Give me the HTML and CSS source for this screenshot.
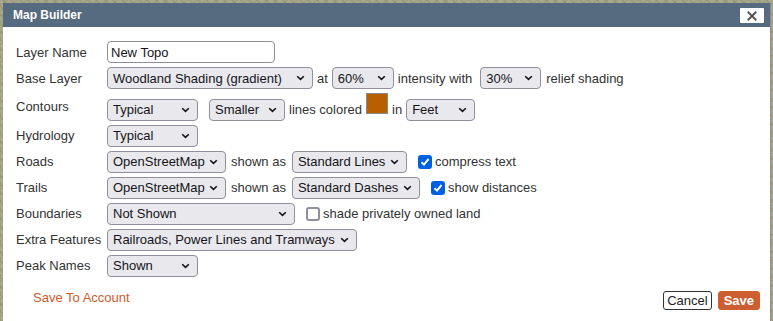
FILE: index.html
```html
<!DOCTYPE html>
<html>
<head>
<meta charset="utf-8">
<title>Map Builder</title>
<link rel="stylesheet" href="styles.css">
</head>
<body>
<div class="dialog">
  <div class="titlebar">
    <span class="title">Map Builder</span>
    <button class="close" aria-label="Close">
      <svg width="10" height="10" viewBox="0 0 10 10"><path d="M1.5 1.5 L8.5 8.5 M8.5 1.5 L1.5 8.5" stroke="#555" stroke-width="2" stroke-linecap="square"/></svg>
    </button>
  </div>
  <div class="content">
    <div class="form">
      <div class="label">Layer Name</div>
      <div class="ctl"><input class="text" type="text" value="New Topo"></div>

      <div class="label">Base Layer</div>
      <div class="ctl">
        <select class="sel w206"><option>Woodland Shading (gradient)</option></select>
        <span>at</span>
        <select class="sel w62"><option>60%</option></select>
        <span>intensity with</span>
        <select class="sel w61 ml4"><option>30%</option></select>
        <span class="ml1">relief shading</span>
      </div>

      <div class="label">Contours</div>
      <div class="ctl">
        <select class="sel w91"><option>Typical</option></select>
        <select class="sel w76 ml7"><option>Smaller</option></select>
        <span>lines colored</span>
        <span class="swatch"></span>
        <span>in</span>
        <select class="sel w69"><option>Feet</option></select>
      </div>

      <div class="label">Hydrology</div>
      <div class="ctl">
        <select class="sel w91"><option>Typical</option></select>
      </div>

      <div class="label">Roads</div>
      <div class="ctl">
        <select class="sel w119"><option>OpenStreetMap</option></select>
        <span class="ml1">shown as</span>
        <select class="sel w115 ml2"><option>Standard Lines</option></select>
        <input class="check ml7" type="checkbox" checked>
        <span class="tight">compress text</span>
      </div>

      <div class="label">Trails</div>
      <div class="ctl">
        <select class="sel w119"><option>OpenStreetMap</option></select>
        <span class="ml1">shown as</span>
        <select class="sel w128 ml2"><option>Standard Dashes</option></select>
        <input class="check ml7" type="checkbox" checked>
        <span class="tight">show distances</span>
      </div>

      <div class="label">Boundaries</div>
      <div class="ctl">
        <select class="sel w188"><option>Not Shown</option></select>
        <input class="check ml7" type="checkbox">
        <span class="tight">shade privately owned land</span>
      </div>

      <div class="label">Extra Features</div>
      <div class="ctl">
        <select class="sel w250"><option>Railroads, Power Lines and Tramways</option></select>
      </div>

      <div class="label">Peak Names</div>
      <div class="ctl">
        <select class="sel w91"><option>Shown</option></select>
      </div>
    </div>

    <div class="footer">
      <a class="account" href="#">Save To Account</a>
      <div class="buttons">
        <button class="btn cancel">Cancel</button>
        <button class="btn save">Save</button>
      </div>
    </div>
  </div>
</div>
</body>
</html>
```
FILE: styles.css
```css
html, body {
  margin: 0;
  padding: 0;
  height: 321px;
  overflow: hidden;
}
body {
  background-color: #a9a88c;
  background-image:
    repeating-linear-gradient(45deg, rgba(120,110,70,0.2) 0 2px, transparent 2px 6px),
    repeating-linear-gradient(-30deg, rgba(90,120,80,0.2) 0 1px, transparent 1px 5px);
  font-family: "Liberation Sans", Arial, sans-serif;
  font-size: 13px;
  color: #333;
}
.dialog {
  margin: 3px 3px 0 3px;
  width: 767px;
  height: 330px;
  background: #fff;
  box-shadow: 1px 0 0 #8c8c84;
}
.titlebar {
  height: 24px;
  background: #566a80;
  display: flex;
  align-items: center;
  justify-content: space-between;
  padding: 0 6px 0 10px;
}
.title {
  color: #fff;
  font-weight: bold;
  font-size: 12px;
}
.close {
  width: 24px;
  height: 15px;
  margin-top: 1px;
  background: #fff;
  border: none;
  border-radius: 1px;
  padding: 0;
  display: flex;
  align-items: center;
  justify-content: center;
}
.content {
  padding: 14px 10px 0 13px;
}
.form {
  display: grid;
  grid-template-columns: 91px auto;
  row-gap: 4px;
}
.label {
  align-self: center;
  white-space: nowrap;
}
.ctl {
  display: flex;
  align-items: baseline;
  gap: 4px;
  white-space: nowrap;
}
.text {
  width: 168px;
  height: 22px;
  box-sizing: border-box;
  border: 1px solid #8f8f9d;
  border-radius: 4px;
  padding: 0 3px;
  font-family: "Liberation Sans", Arial, sans-serif;
  font-size: 13px;
  color: #15141a;
  background: #fff;
  margin: 0;
}
.sel {
  -webkit-appearance: none;
  appearance: none;
  height: 22px;
  box-sizing: border-box;
  border: 1px solid #8f8f9d;
  border-radius: 4px;
  background-color: #e9e9ed;
  background-image: url("data:image/svg+xml,%3Csvg xmlns='http://www.w3.org/2000/svg' width='9' height='6' viewBox='0 0 9 6'%3E%3Cpath d='M1.2 1.2 L4.5 4.4 L7.8 1.2' fill='none' stroke='%2315141a' stroke-width='1.6'/%3E%3C/svg%3E");
  background-repeat: no-repeat;
  background-position: right 7px center;
  padding: 0 20px 0 5px;
  font-family: "Liberation Sans", Arial, sans-serif;
  font-size: 13px;
  color: #15141a;
  margin: 0;
}
.w61 { width: 61px; }
.w62 { width: 62px; }
.w69 { width: 69px; }
.w76 { width: 76px; }
.w91 { width: 91px; }
.w115 { width: 115px; }
.w119 { width: 119px; }
.w128 { width: 128px; }
.w188 { width: 188px; }
.w206 { width: 206px; }
.w250 { width: 250px; }
.ml1 { margin-left: 1px; }
.ml2 { margin-left: 2px; }
.ml4 { margin-left: 4px; }
.ml7 { margin-left: 7px; }
.tight { margin-left: -1px; }
.swatch {
  display: inline-block;
  width: 22px;
  height: 21px;
  box-sizing: border-box;
  border: 1px solid #8a8a8a;
  background: #b85f00;
}
.check {
  -webkit-appearance: none;
  appearance: none;
  align-self: center;
  width: 14px;
  height: 14px;
  box-sizing: border-box;
  margin-top: 0;
  margin-bottom: 0;
  margin-right: 0;
  border: 2px solid #8f8f9d;
  border-radius: 3px;
  background: #fff;
}
.check:checked {
  border-color: #0060df;
  background-color: #0060df;
  background-image: url("data:image/svg+xml,%3Csvg xmlns='http://www.w3.org/2000/svg' width='10' height='10' viewBox='0 0 10 10'%3E%3Cpath d='M1.5 5.2 L4 7.6 L8.6 2' fill='none' stroke='%23fff' stroke-width='2'/%3E%3C/svg%3E");
  background-repeat: no-repeat;
  background-position: center;
}
.footer {
  display: flex;
  justify-content: space-between;
  align-items: flex-start;
  margin-top: 14px;
}
.account {
  color: #d05a2c;
  text-decoration: none;
  margin-left: 17px;
  line-height: 15px;
  margin-top: -1px;
}
.buttons {
  display: flex;
  gap: 6px;
}
.btn {
  height: 19px;
  box-sizing: border-box;
  font-family: "Liberation Sans", Arial, sans-serif;
  font-size: 13px;
  border-radius: 3px;
  margin: 0;
  line-height: 15px;
}
.cancel {
  background: #fff;
  border: 1px solid #333;
  color: #222;
  padding: 0 3px;
}
.save {
  background: #cc5e32;
  border: 1px solid #cc5e32;
  color: #fff;
  font-weight: bold;
  padding: 0 5px;
}
```
